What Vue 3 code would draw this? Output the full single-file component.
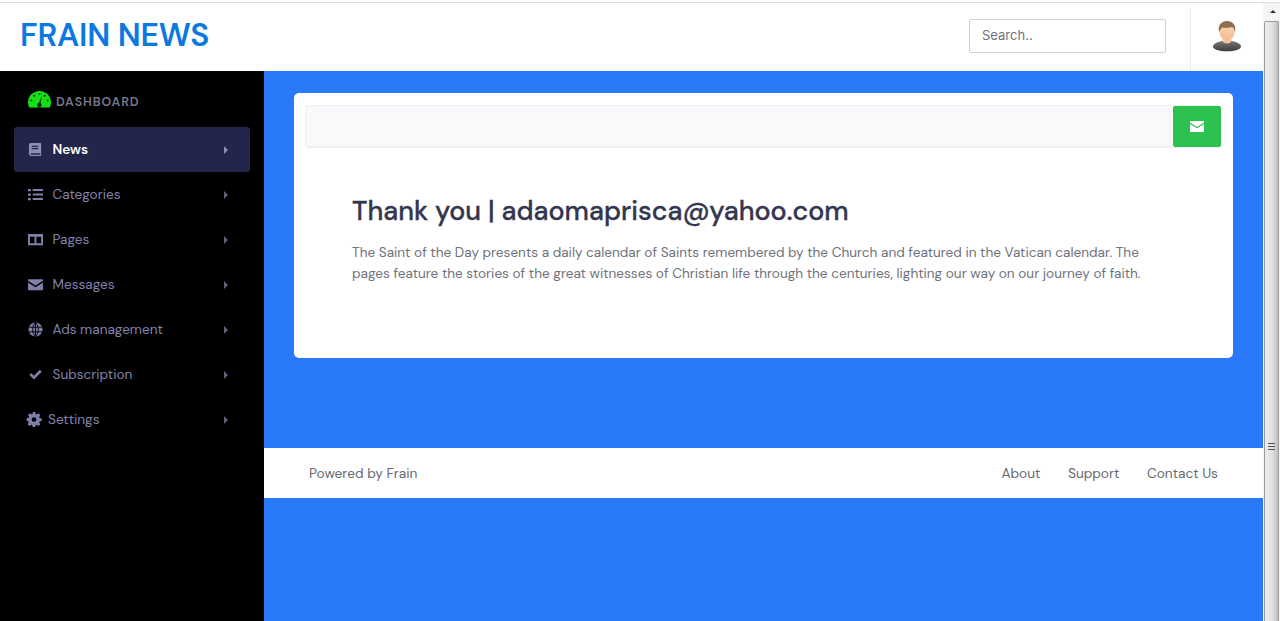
<template>
  <div class="screen">
    <div class="page">
      <header class="topbar">
        <div class="logo">FRAIN NEWS</div>
        <input class="search" type="text" placeholder="Search.." />
        <div class="user">
          <svg width="32" height="34" viewBox="0 0 32 34">
            <defs>
              <linearGradient id="shirt" x1="0" y1="0" x2="0" y2="1">
                <stop offset="0" stop-color="#787878" />
                <stop offset="1" stop-color="#3c3c3c" />
              </linearGradient>
              <linearGradient id="skin" x1="0" y1="0" x2="0" y2="1">
                <stop offset="0" stop-color="#fbd8b6" />
                <stop offset="1" stop-color="#f2bb90" />
              </linearGradient>
            </defs>
            <path d="M2 26.500c0-2.500 4-4.500 9-5.500h10c5 1 9 3 9 5.500 0 3-6 4.800-14 4.800S2 29.500 2 26.500z" fill="url(#shirt)" />
            <path d="M11.500 16h9v4.500c0 1.800-2 3-4.500 3s-4.500-1.200-4.500-3z" fill="url(#skin)" />
            <ellipse cx="16" cy="11" rx="7.800" ry="9.500" fill="url(#skin)" />
            <path d="M8 12C6.500 5 10.500 1 16 1s9.500 4 8 11c-.8-3-1.500-4.500-3-5-3 1-7 1-9.500.5C10 8.500 8.800 10 8 12z" fill="#8f6f4e" />
          </svg>
        </div>
      </header>

      <div class="body">
        <aside class="sidebar">
          <div class="dash">
            <svg width="23" height="17" viewBox="0 0 24 18" preserveAspectRatio="none">
              <path d="M12 0C5.400 0 0 5.400 0 12c0 2 .4 3.800 1.200 5.500h21.600C23.600 15.800 24 14 24 12 24 5.400 18.600 0 12 0z" fill="#14e014" />
              <path d="M14.600 4.500l-1.500 8.200c.6.500 1 1.200 1 2 0 1.300-1 2.800-2.200 2.800s-2.200-1.500-2.200-2.800c0-1.100.8-2 1.800-2.200z" fill="#0a2a0a" />
              <g fill="#0a2a0a">
                <circle cx="12" cy="3" r="1" />
                <circle cx="6.500" cy="5" r="1" />
                <circle cx="17.500" cy="5" r="1" />
                <circle cx="3.500" cy="10" r="1" />
                <circle cx="20.500" cy="10" r="1" />
              </g>
            </svg>
            <span>DASHBOARD</span>
          </div>
          <nav class="nav">
            <a v-for="item in items" :key="item.label" class="nav-item" :class="{ active: item.active, wide: item.wide }">
              <svg class="nav-icon" :width="item.wide ? 16 : 15" height="15" viewBox="0 0 16 16" v-html="item.icon"></svg>
              <span class="nav-label">{{ item.label }}</span>
              <span class="caret"></span>
            </a>
          </nav>
        </aside>

        <main class="main">
          <section class="card">
            <div class="toolbar">
              <button class="mail-btn" type="button">
                <svg width="14" height="11" viewBox="0 0 14 11">
                  <path d="M1 0h12c.6 0 1 .4 1 1v.6L7 6 0 1.600V1c0-.6.4-1 1-1z" fill="#fff" />
                  <path d="M0 3l7 4.300L14 3v7c0 .6-.4 1-1 1H1c-.6 0-1-.4-1-1z" fill="#fff" />
                </svg>
              </button>
            </div>
            <div class="message">
              <h1>Thank you | adaomaprisca@yahoo.com</h1>
              <p>The Saint of the Day presents a daily calendar of Saints remembered by the Church and featured in the Vatican calendar. The pages feature the stories of the great witnesses of Christian life through the centuries, lighting our way on our journey of faith.</p>
            </div>
          </section>
          <footer class="foot">
            <span>Powered by Frain</span>
            <div class="foot-links">
              <a>About</a>
              <a>Support</a>
              <a>Contact Us</a>
            </div>
          </footer>
        </main>
      </div>
    </div>

    <div class="scrollbar">
      <div class="arrow"></div>
      <div class="thumb">
        <div class="grip"></div>
      </div>
    </div>
  </div>
</template>

<script setup>
const items = [
  {
    label: "News",
    active: true,
    icon: '<path d="M3 1h10.500c.3 0 .5.2.5.5v13c0 .3-.2.5-.5.5H3.500C2.100 15 1 14 1 12.700V3c0-1.100.9-2 2-2z" fill="currentColor"/><path d="M4 4h7v1.200H4zM4 6.500h7v1.200H4zM3 12h10v1.500H3z" fill="#23264a"/>',
  },
  {
    label: "Categories",
    icon: '<path d="M0 2h3v2.400H0zM5 2.200h11v2H5zM0 6.800h3v2.400H0zM5 7h11v2H5zM0 11.600h3V14H0zM5 11.800h11v2H5z" fill="currentColor"/>',
  },
  {
    label: "Pages",
    icon: '<path fill-rule="evenodd" d="M0 2h16v12H0zM2 5v7h5V5zM9 5v7h5V5z" fill="currentColor"/>',
  },
  {
    label: "Messages",
    icon: '<path d="M1 2.500h14c.5 0 1 .4 1 1v.5L8 9 0 4v-.5c0-.6.5-1 1-1z" fill="currentColor"/><path d="M0 5.800l8 5 8-5V13c0 .6-.5 1-1 1H1c-.5 0-1-.4-1-1z" fill="currentColor"/>',
  },
  {
    label: "Ads management",
    icon: '<circle cx="8" cy="8" r="7.500" fill="currentColor"/><path d="M.5 5.500h15M.5 10.500h15M8 .5c-4 4-4 11 0 15M8 .5c4 4 4 11 0 15M8 .5v15" stroke="#000" stroke-width="1" fill="none"/>',
  },
  {
    label: "Subscription",
    icon: '<path d="M1.500 8.500L3.500 6.500 6.300 9.300 12.600 3 14.600 5 6.300 13.300z" fill="currentColor"/>',
  },
  {
    label: "Settings",
    wide: true,
    icon: '<path fill-rule="evenodd" d="M6.600 0h2.800l.4 2.200 1.100.5 1.900-1.300 2 2-1.300 1.900.5 1.100 2.200.4v2.800l-2.200.4-.5 1.100 1.300 1.900-2 2-1.900-1.300-1.100.5-.4 2.200H6.600l-.4-2.200-1.100-.5-1.900 1.300-2-2 1.300-1.900-.5-1.100L.2 9.400V6.600l2.200-.4.5-1.100L1.600 3.200l2-2 1.900 1.300 1.100-.5zM8 5.500a2.500 2.500 0 1 0 0 5 2.500 2.500 0 0 0 0-5z" fill="currentColor"/>',
  },
];
</script>

<style>
html,
body {
  overflow: hidden;
}
</style>

<style scoped>
.screen {
  display: flex;
  width: 1280px;
  height: 621px;
  box-sizing: border-box;
  padding-top: 2px;
  background: #fff;
  overflow: hidden;
  font-family: "DM Sans", Inter, "Noto Sans", sans-serif;
}
.page {
  flex: 1;
  min-width: 0;
  display: flex;
  flex-direction: column;
  border-top: 1px solid #dcdcdc;
}
.topbar {
  height: 68px;
  flex: none;
  display: flex;
  align-items: center;
  background: #fff;
  padding-left: 20px;
}
.logo {
  font-size: 32px;
  font-weight: 600;
  letter-spacing: -0.2px;
  color: #0a7ae0;
  margin-right: auto;
  margin-top: -4px;
}
.search {
  box-sizing: border-box;
  width: 197px;
  height: 34px;
  border: 1px solid #cfcfcf;
  border-radius: 2px;
  padding: 0 12px 2px;
  margin-top: -2px;
  font: 13px Inter, sans-serif;
  outline: none;
}
.search::placeholder {
  color: #6f7278;
  opacity: 1;
}
.user {
  align-self: flex-end;
  box-sizing: border-box;
  height: 63px;
  width: 73px;
  margin-left: 24px;
  border-left: 1px solid #ececec;
  padding: 12px 0 0 20px;
}
.body {
  flex: 1;
  display: flex;
  min-height: 0;
}
.sidebar {
  width: 264px;
  flex: none;
  background: #000;
}
.dash {
  display: flex;
  align-items: center;
  gap: 5px;
  height: 56px;
  padding: 0 0 0 28px;
  box-sizing: border-box;
  font-size: 12.500px;
  font-weight: 600;
  letter-spacing: 0.9px;
  color: #77778c;
}
.dash span {
  margin-top: 5px;
}
.nav {
  display: flex;
  flex-direction: column;
  padding: 0 14px;
}
.nav-item {
  display: flex;
  align-items: center;
  height: 45px;
  width: 236px;
  padding: 0 22px 0 14px;
  box-sizing: border-box;
  border-radius: 3px;
  font-size: 13.600px;
  color: #8283ad;
}
.nav-item.active {
  background: #23264a;
  color: #fff;
  font-weight: 600;
}
.nav-item.active .nav-icon {
  color: #8d8fb8;
}
.nav-icon {
  flex: none;
  margin-right: 9.500px;
  color: #7f80aa;
}
.nav-item.wide {
  padding-left: 12px;
}
.nav-item.wide .nav-icon {
  margin-right: 6px;
}
.nav-label {
  flex: 1;
}
.caret {
  width: 0;
  height: 0;
  border-left: 4px solid #5f6178;
  border-top: 4px solid transparent;
  border-bottom: 4px solid transparent;
}
.nav-item.active .caret {
  border-left-color: #8d8fa8;
}
.main {
  flex: 1;
  min-width: 0;
  background: #2979f9;
  padding: 22px 0 0;
}
.card {
  box-sizing: border-box;
  height: 265px;
  margin: 0 30px;
  padding: 12px;
  background: #fff;
  border-radius: 5px;
}
.toolbar {
  display: flex;
  justify-content: flex-end;
  align-items: center;
  height: 43px;
  margin-left: -1px;
  background: #f9f9fc;
  border: 1px solid #f0f0f6;
  border-bottom: 2px solid #eeeef4;
  border-right: none;
  border-radius: 4px;
  box-sizing: border-box;
}
.mail-btn {
  width: 48px;
  height: 41px;
  margin-top: 1px;
  border: none;
  padding: 0;
  background: #2dc150;
  border-radius: 2px;
  display: flex;
  align-items: center;
  justify-content: center;
}
.message {
  padding: 44px 46px 0;
}
.message h1 {
  margin: 0;
  font-size: 26.900px;
  line-height: 38px;
  font-weight: 500;
  -webkit-text-stroke: 0.3px #33364f;
  color: #33364f;
}
.message p {
  margin: 12px 0 0;
  font-size: 13.600px;
  line-height: 21px;
  color: #6f727c;
}
.foot {
  margin-top: 90px;
  height: 50px;
  display: flex;
  align-items: center;
  justify-content: space-between;
  padding: 0 45px;
  background: #fff;
  font-size: 13.700px;
  color: #666971;
}
.foot-links {
  display: flex;
  gap: 27.500px;
}
.scrollbar {
  width: 17px;
  flex: none;
  background: #f5f5f5;
  border-top: 1px solid #dcdcdc;
  box-sizing: border-box;
  display: flex;
  flex-direction: column;
}
.arrow {
  height: 18px;
  flex: none;
  position: relative;
}
.arrow::after {
  content: "";
  position: absolute;
  left: 7px;
  top: 7px;
  border-left: 3px solid transparent;
  border-right: 3px solid transparent;
  border-bottom: 3px solid #333;
}
.thumb {
  flex: 1;
  margin: 0 1px 0 1px;
  background: linear-gradient(90deg, #f0ecec 0%, #e2e0e0 55%, #bdbdc0 100%);
  border: 1px solid #9b9b9b;
  border-bottom: none;
  border-radius: 2px 2px 0 0;
  padding-top: 421px;
}
.grip {
  width: 7px;
  height: 7px;
  margin-left: 3px;
  background: repeating-linear-gradient(#555 0 1px, transparent 1px 3px);
}
</style>
